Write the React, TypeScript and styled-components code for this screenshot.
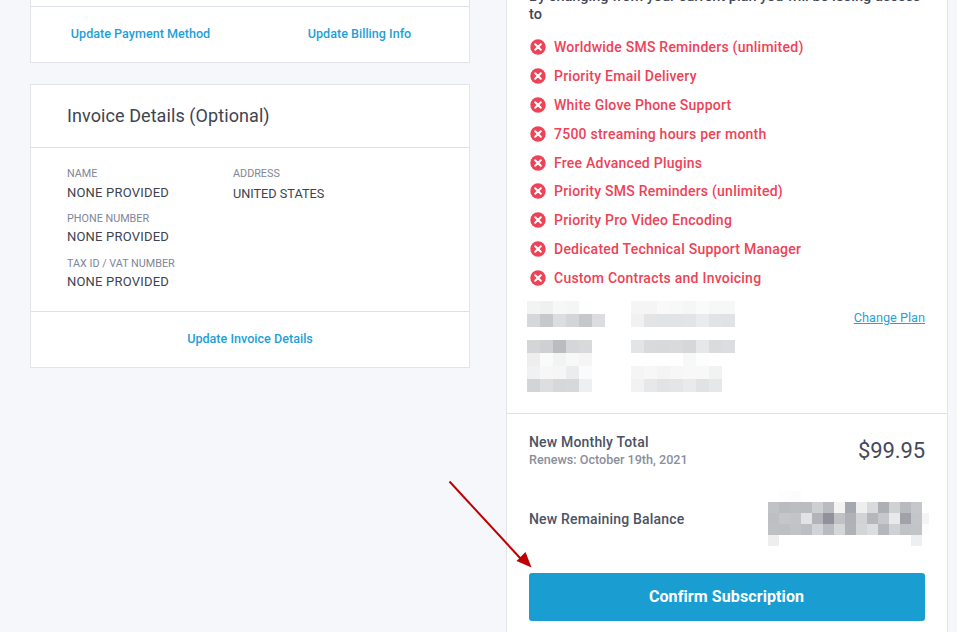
import React from "react";
import styled, { createGlobalStyle } from "styled-components";

const Global = createGlobalStyle`
  html, body { margin: 0; padding: 0; height: 632px; overflow: hidden; background: #f5f7fb; }
  body { font-family: Roboto, "Liberation Sans", sans-serif; color: #3d4350; }
`;

const Page = styled.div`
  position: relative;
  width: 957px;
  height: 632px;
  overflow: hidden;
  display: flex;
  align-items: flex-start;
  padding-left: 30px;
  box-sizing: border-box;
`;
const LeftColumn = styled.div`
  width: 440px;
  display: flex;
  flex-direction: column;
  gap: 21px;
`;
const Card = styled.section`
  background: #fff;
  border: 1px solid #e1e4ea;
  border-top-width: ${(p: { $open?: boolean }) => (p.$open ? 0 : 1)}px;
`;
const CutOff = styled.div`
  height: 6px;
  border-bottom: 1px solid #dbe1e7;
`;
const LinkRow = styled.div`
  height: 55px;
  box-sizing: border-box;
  padding-bottom: 2px;
  display: grid;
  grid-template-columns: 1fr 1fr;
  align-items: center;
  justify-items: center;
`;
const ActionLink = styled.a`
  color: #1f9fd8;
  font-size: 12.6px;
  font-weight: 500;
  line-height: 16px;
`;
const CardTitle = styled.h2`
  margin: 0;
  height: 63px;
  box-sizing: border-box;
  padding-left: 36px;
  font-size: 18px;
  font-weight: 400;
  line-height: 62px;
  color: #3e4450;
  letter-spacing: 0.08px;
  border-bottom: 1px solid #dbe1e7;
`;
const DetailBody = styled.div`
  height: 164px;
  box-sizing: border-box;
  padding: 20px 36px 0;
  display: grid;
  grid-template-columns: 166px 1fr;
  border-bottom: 1px solid #dbe1e7;
`;
const DetailColumn = styled.div`
  display: flex;
  flex-direction: column;
  gap: 13px;
`;
const DetailItem = styled.div`
  min-height: 32px;
`;
const DetailLabel = styled.div`
  color: #7f8698;
  font-size: 10.8px;
  font-weight: 400;
  line-height: 12px;
  text-transform: uppercase;
`;
const DetailValue = styled.div<{ $offset?: number; $tight?: boolean }>`
  color: #3d4350;
  font-size: ${(p) => (p.$tight ? 12.7 : 13)}px;
  line-height: 15px;
  margin-top: ${(p) => 5 + (p.$offset ?? 0)}px;
  letter-spacing: ${(p) => (p.$tight ? 0 : 0.2)}px;
`;
const CenterRow = styled.div`
  height: 55px;
  box-sizing: border-box;
  padding-bottom: 2px;
  display: flex;
  align-items: center;
  justify-content: center;
`;

const RightColumn = styled.aside`
  width: 440px;
  height: 660px;
  margin-top: -15px;
  margin-left: 36px;
  background: #fff;
  border-left: 1px solid #e1e4ea;
  border-right: 1px solid #e1e4ea;
  flex: none;
`;
const LossSection = styled.div`
  padding: 3px 22px 0;
  height: 429px;
  box-sizing: border-box;
  border-bottom: 1px solid #dbe1e7;
`;
const Intro = styled.p`
  margin: 0;
  font-size: 14.5px;
  line-height: 18px;
  font-weight: 500;
  color: #3f4654;
  width: 396px;
`;
const LossList = styled.ul`
  list-style: none;
  margin: 9px 0 0;
  padding: 0;
`;
const LossItem = styled.li`
  height: 28.8px;
  display: flex;
  align-items: center;
  gap: 8px;
  padding-left: 1px;
  color: #ee4257;
  font-size: 14px;
  font-weight: 500;
  letter-spacing: 0.24px;
`;
const PlanRow = styled.div`
  margin-top: 9px;
  margin-left: -2px;
  display: grid;
  grid-template-columns: 104px 1fr auto;
`;
const PlanStack = styled.div`
  display: flex;
  flex-direction: column;
  gap: 13px;
`;
const ChangePlan = styled.a`
  color: #2aa2d6;
  font-size: 12.7px;
  line-height: 16px;
  text-decoration: underline;
  margin-top: 9px;
`;
const Blur = styled.svg`
  display: block;
  shape-rendering: crispEdges;
`;
const Totals = styled.div`
  padding: 0 22px;
`;
const TotalRow = styled.div`
  height: 73px;
  display: flex;
  justify-content: space-between;
  align-items: center;
`;
const TotalName = styled.div`
  font-size: 14px;
  font-weight: 500;
  line-height: 16px;
  letter-spacing: 0.18px;
  color: #4a5264;
`;
const TotalNote = styled.div`
  font-size: 12.6px;
  font-weight: 500;
  line-height: 15px;
  margin-top: 2px;
  color: #8a8f9c;
`;
const Price = styled.div`
  font-size: 22px;
  font-weight: 400;
  letter-spacing: -0.1px;
  color: #444a56;
`;
const BalanceRow = styled.div`
  height: 86px;
  display: flex;
  justify-content: space-between;
  align-items: flex-start;
  padding-top: 4px;
  box-sizing: border-box;
`;
const BalanceName = styled(TotalName)`
  margin-top: 20px;
`;
const BalanceValue = styled.div`
  width: 161px;
  margin-right: -4px;
  overflow: hidden;
`;
const ConfirmButton = styled.button`
  display: block;
  width: 396px;
  height: 48px;
  border: 0;
  border-radius: 3px;
  padding: 0 1px 2px 0;
  background: #1a9dd1;
  color: #fff;
  font-family: inherit;
  font-size: 16px;
  font-weight: 700;
  letter-spacing: 0.1px;
`;
const Arrow = styled.svg`
  position: absolute;
  left: 0;
  top: 0;
  pointer-events: none;
`;

const Mosaic = ({ rows, size }: { rows: string[][]; size: number }) => {
  const w = Math.max(...rows.map((r) => r.length)) * size;
  return (
    <Blur width={w} height={rows.length * size}>
      {rows.map((r, y) =>
        r.map((c, x) => (
          <rect key={`${x}-${y}`} x={x * size} y={y * size} width={size} height={size} fill={c} />
        ))
      )}
    </Blur>
  );
};

const XIcon = () => (
  <svg width="16" height="16" viewBox="0 0 16 16" style={{ flex: "none" }}>
    <circle cx="8" cy="8" r="7.7" fill="#ee4257" />
    <path d="M5.2 5.2l5.6 5.6M10.8 5.2l-5.6 5.6" stroke="#fff" strokeWidth="2" strokeLinecap="round" />
  </svg>
);

const W = "#ffffff";
const groupA = [
  ["#f2f3f3", "#eff0f0", "#f6f7f7", "#f4f5f5", "#fefefe", W],
  ["#d6d7d9", "#c7c8cc", "#dcdddf", "#d4d5d8", "#c6c7cb", "#dcdde0"],
];
const groupB = [
  ["#f5f5f5", "#f5f5f5", "#f9f9f9", "#f8f8f8", "#f5f6f6", "#f9fafa", "#f6f7f7", "#f7f7f7"],
  ["#f1f1f1", "#e3e4e6", "#e2e3e5", "#e2e3e5", "#e3e4e6", "#eaebec", "#e2e3e5", "#e1e2e4"],
];
const groupC = [
  ["#d4d5d7", "#cfd0d3", "#bbbcc0", "#d5d6d9", "#d8d9db"],
  ["#eeeeef", "#fafafa", "#f2f3f3", "#f8f8f8", "#f5f5f5"],
  ["#f0f1f2", "#f7f7f7", "#f6f6f6", "#ebecee", "#fbfbfb"],
  ["#d3d4d7", "#dddee0", "#d6d7d9", "#d7d8da", "#eeeff0"],
];
const groupD = [
  ["#e3e4e6", "#d9dadc", "#d8d9db", "#d9dadc", "#d6d7d9", "#e6e7e8", "#dadbdd", "#dcdde0"],
  [W, W, W, W, "#f7f8f8", "#fdfdfd", W, W],
  ["#f5f5f5", "#f7f7f7", "#f4f4f4", "#f7f7f7", "#f8f8f8", "#f8f8f8", "#f1f2f2", W],
  ["#f2f2f2", "#e7e8e9", "#e2e3e5", "#e4e5e6", "#e9eaeb", "#e1e2e4", "#e6e7e8", W],
];
const groupE = [
  [W, "#fdfdfd", "#fcfcfc", W, W, W, W, W, W, W, W, W, W, W, W],
  ["#c0c2c6", "#b9bbc0", "#bbbdc1", "#babcc1", "#cdcfd1", "#b9bbc0", "#f3f3f3", "#a5a8ae", "#eeeeee", "#d9dadc", "#adafb5", "#cfd1d3", "#b8bac0", "#c5c7cb", W],
  ["#bdbfc3", "#c4c6ca", "#c2c4c8", "#e2e3e5", "#b2b4b9", "#8f929c", "#bfc1c5", "#afb1b7", "#d2d3d6", "#b5b7bb", "#c5c7cb", "#e8e9ea", "#a0a2a9", "#c3c5c9", "#f4f4f5"],
  ["#bec0c4", "#bdbfc3", "#c1c3c7", "#bcbec3", "#d2d3d7", "#b9bbc0", "#d5d6d8", "#b0b2b7", "#d4d5d7", "#dcdddf", "#b5b7bc", "#d0d1d5", "#c0c2c6", "#c2c4c8", "#fbfcfb"],
  ["#eeeeef", W, W, W, W, W, W, W, W, W, W, W, W, "#eeeff0", W],
];

const losses = [
  "Worldwide SMS Reminders (unlimited)",
  "Priority Email Delivery",
  "White Glove Phone Support",
  "7500 streaming hours per month",
  "Free Advanced Plugins",
  "Priority SMS Reminders (unlimited)",
  "Priority Pro Video Encoding",
  "Dedicated Technical Support Manager",
  "Custom Contracts and Invoicing",
];

export default function App() {
  return (
    <>
      <Global />
      <Page>
        <LeftColumn>
          <Card $open>
            <CutOff />
            <LinkRow>
              <ActionLink>Update Payment Method</ActionLink>
              <ActionLink>Update Billing Info</ActionLink>
            </LinkRow>
          </Card>
          <Card>
            <CardTitle>Invoice Details (Optional)</CardTitle>
            <DetailBody>
              <DetailColumn>
                <DetailItem>
                  <DetailLabel>Name</DetailLabel>
                  <DetailValue>NONE PROVIDED</DetailValue>
                </DetailItem>
                <DetailItem>
                  <DetailLabel>Phone Number</DetailLabel>
                  <DetailValue $offset={-1}>NONE PROVIDED</DetailValue>
                </DetailItem>
                <DetailItem>
                  <DetailLabel>Tax ID / VAT Number</DetailLabel>
                  <DetailValue $offset={-1}>NONE PROVIDED</DetailValue>
                </DetailItem>
              </DetailColumn>
              <DetailColumn>
                <DetailItem>
                  <DetailLabel>Address</DetailLabel>
                  <DetailValue $offset={1} $tight>UNITED STATES</DetailValue>
                </DetailItem>
              </DetailColumn>
            </DetailBody>
            <CenterRow>
              <ActionLink>Update Invoice Details</ActionLink>
            </CenterRow>
          </Card>
        </LeftColumn>
        <RightColumn>
          <LossSection>
            <Intro>By changing from your current plan you will be losing access to</Intro>
            <LossList>
              {losses.map((l) => (
                <LossItem key={l}>
                  <XIcon />
                  {l}
                </LossItem>
              ))}
            </LossList>
            <PlanRow>
              <PlanStack>
                <Mosaic rows={groupA} size={13} />
                <Mosaic rows={groupC} size={13} />
              </PlanStack>
              <PlanStack>
                <Mosaic rows={groupB} size={13} />
                <Mosaic rows={groupD} size={13} />
              </PlanStack>
              <ChangePlan>Change Plan</ChangePlan>
            </PlanRow>
          </LossSection>
          <Totals>
            <TotalRow>
              <div>
                <TotalName>New Monthly Total</TotalName>
                <TotalNote>Renews: October 19th, 2021</TotalNote>
              </div>
              <Price>$99.95</Price>
            </TotalRow>
            <BalanceRow>
              <BalanceName>New Remaining Balance</BalanceName>
              <BalanceValue>
                <Mosaic rows={groupE} size={11} />
              </BalanceValue>
            </BalanceRow>
            <ConfirmButton>Confirm Subscription</ConfirmButton>
          </Totals>
        </RightColumn>
        <Arrow width="957" height="632" viewBox="0 0 957 632">
          <path d="M449.5 481.5L521 559" stroke="#c00000" strokeWidth="2" />
          <path d="M531.5 567.5L516.5 561L525.5 552Z" fill="#c00000" />
        </Arrow>
      </Page>
    </>
  );
}
